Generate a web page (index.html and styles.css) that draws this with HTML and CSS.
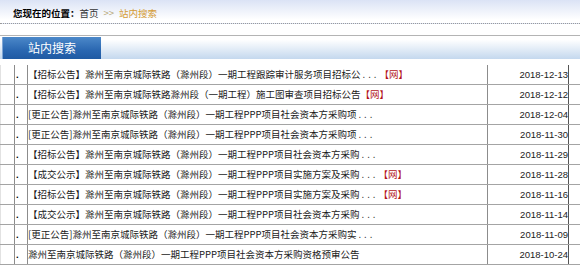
FILE: index.html
```html
<!DOCTYPE html>
<html lang="zh-cn">
<head>
    <meta charset="UTF-8">
    <title>站内搜索</title>
    <link rel="stylesheet" href="styles.css">
</head>
<body>
    <div class="weizhi">
        <b>您现在的位置：</b><a href="#">首页</a><span class="jt">&gt;&gt;</span><span class="dq">站内搜索</span>
    </div>

    <div class="lanmu">
        <div class="lanmu-tab">站内搜索</div>
    </div>

    <ul class="liebiao">
        <li><span class="k"></span><span class="dian">.</span><a href="#">【招标公告】滁州至南京城际铁路（滁州段）一期工程跟踪审计服务项目招标公<i class="sl">...</i><em class="wang">【网】</em></a><span class="rq">2018-12-13</span><span class="k2"></span></li>
        <li><span class="k"></span><span class="dian">.</span><a href="#">【招标公告】滁州至南京城际铁路滁州段（一期工程）施工图审查项目招标公告<em class="wang">【网】</em></a><span class="rq">2018-12-12</span><span class="k2"></span></li>
        <li><span class="k"></span><span class="dian">.</span><a href="#">[更正公告]滁州至南京城际铁路（滁州段）一期工程PPP项目社会资本方采购项<i class="sl">...</i></a><span class="rq">2018-12-04</span><span class="k2"></span></li>
        <li><span class="k"></span><span class="dian">.</span><a href="#">[更正公告]滁州至南京城际铁路（滁州段）一期工程PPP项目社会资本方采购项<i class="sl">...</i></a><span class="rq">2018-11-30</span><span class="k2"></span></li>
        <li><span class="k"></span><span class="dian">.</span><a href="#">【招标公告】滁州至南京城际铁路（滁州段）一期工程PPP项目社会资本方采购<i class="sl">...</i></a><span class="rq">2018-11-29</span><span class="k2"></span></li>
        <li><span class="k"></span><span class="dian">.</span><a href="#">【成交公示】滁州至南京城际铁路（滁州段）一期工程PPP项目实施方案及采购<i class="sl">...</i><em class="wang">【网】</em></a><span class="rq">2018-11-28</span><span class="k2"></span></li>
        <li><span class="k"></span><span class="dian">.</span><a href="#">【招标公告】滁州至南京城际铁路（滁州段）一期工程PPP项目实施方案及采购<i class="sl">...</i><em class="wang">【网】</em></a><span class="rq">2018-11-16</span><span class="k2"></span></li>
        <li><span class="k"></span><span class="dian">.</span><a href="#">【成交公示】滁州至南京城际铁路（滁州段）一期工程PPP项目社会资本方采购<i class="sl">...</i></a><span class="rq">2018-11-14</span><span class="k2"></span></li>
        <li><span class="k"></span><span class="dian">.</span><a href="#">[更正公告]滁州至南京城际铁路（滁州段）一期工程PPP项目社会资本方采购实<i class="sl">...</i></a><span class="rq">2018-11-09</span><span class="k2"></span></li>
        <li><span class="k"></span><span class="dian">.</span><a href="#">滁州至南京城际铁路（滁州段）一期工程PPP项目社会资本方采购资格预审公告</a><span class="rq">2018-10-24</span><span class="k2"></span></li>
    </ul>
</body>
</html>
```

FILE: styles.css
```css
body { margin: 0; padding: 0; background: #fff; font-family: "Noto Sans CJK SC", sans-serif; font-size: 9.5px; color: #222; }
a { color: #1a1a1a; text-decoration: none; }

.weizhi { height: 20px; padding: 3px 0 0 13px; display: flex; align-items: center; border-bottom: 1px dotted #9a9a9a; background: linear-gradient(#dbe3f5, #fff 85%); line-height: 10px; }
.weizhi b { color: #000; font-weight: bold; }
.weizhi a { color: #333; }
.weizhi .jt { color: #b8a878; margin: 0 5px; }
.weizhi .dq { color: #d49b33; }

.lanmu { margin-top: 11px; border-top: 1px solid #b4b4b4; height: 22px; padding-top: 1px; background: linear-gradient(#fff, #fff 15%, #c4d8ee); }
.lanmu-tab { margin-left: 2px; width: 99px; height: 22px; line-height: 22px; text-align: center; color: #fff; font-size: 12px; background: linear-gradient(#4c88c9, #2a67b1 60%, #1f5aa3); border-left: 1px solid #7ea6d6; box-sizing: border-box; }

.liebiao { list-style: none; margin: 6px 0 0; padding: 0; }
.liebiao li { display: grid; grid-template-columns: 15px 13px 460px 81px 1fr; height: 20px; line-height: 19px; border-bottom: 1px solid #a4a4a4; box-sizing: border-box; }
.liebiao li span, .liebiao li a { box-sizing: border-box; white-space: nowrap; overflow: hidden; }
.liebiao .k { border-right: 1px solid #8c8c8c; border-left: 1px solid #e2e2e2; }
.liebiao .dian { border-right: 1px solid #8c8c8c; padding-left: 1px; color: #000; font-family: "Liberation Sans", sans-serif; font-weight: bold; }
.liebiao a { border-right: 1px solid #8c8c8c; }
.liebiao .rq { border-right: 1px solid #555; text-align: right; font-family: "Liberation Sans", sans-serif; color: #222; }
.sl { font-style: normal; letter-spacing: 3px; margin-left: 2px; }
.wang { font-style: normal; color: #b3141b; }
```
